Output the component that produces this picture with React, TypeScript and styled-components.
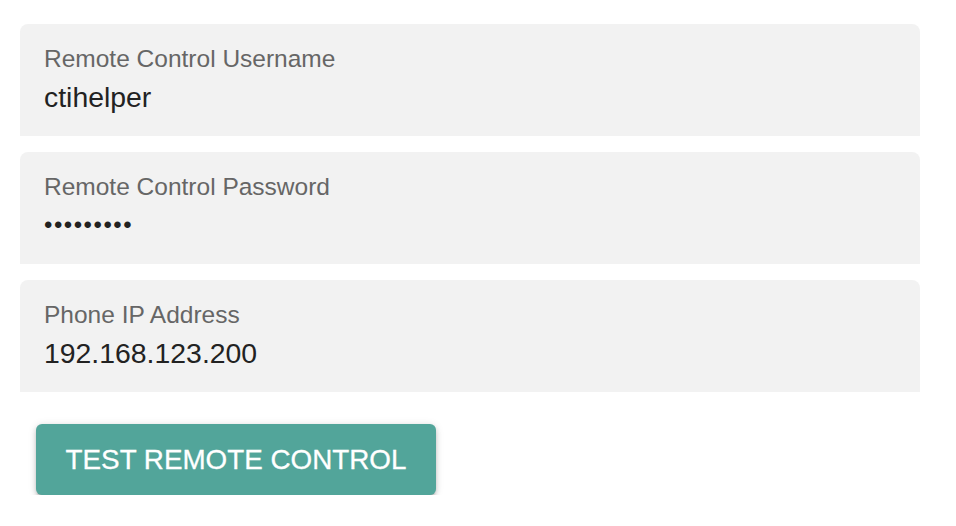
import React from "react"
import styled, { createGlobalStyle } from "styled-components"

const GlobalStyle = createGlobalStyle`
	html, body {
		margin: 0;
		padding: 0;
		background: #ffffff;
		font-family: "Liberation Sans", Arial, Helvetica, sans-serif;
	}
`

const Page = styled.div`
	display: flex;
	flex-direction: column;
	gap: 16px;
	padding: 24px 36px 0 20px;
	width: 900px;
`

const Field = styled.div`
	height: 112px;
	box-sizing: border-box;
	background-color: #f2f2f2;
	border-radius: 8px 8px 0 0;
	padding: 21px 24px 0 24px;
	display: flex;
	flex-direction: column;
`

const Label = styled.label`
	font-size: 24.5px;
	line-height: 28px;
	color: #666666;
`

const Value = styled.div<{ $secret?: boolean }>`
	margin-top: 4px;
	font-size: ${(p) => (p.$secret ? "24px" : "28.4px")};
	line-height: 40px;
	height: 40px;
	color: #222222;
	letter-spacing: ${(p) => (p.$secret ? "1.5px" : "0")};
`

const Actions = styled.div`
	padding: 16px 0 0 16px;
`

const Button = styled.button`
	height: 71px;
	width: 400px;
	border: none;
	border-radius: 6px;
	background-color: #52a59a;
	color: #ffffff;
	font-family: "Liberation Sans", Arial, Helvetica, sans-serif;
	font-size: 27.8px;
	text-transform: uppercase;
	-webkit-text-stroke: 0.3px #ffffff;
	box-shadow: 0 3px 3px -2px rgba(0, 0, 0, 0.22), 0 3px 5px 0 rgba(0, 0, 0, 0.16),
		0 1px 8px 0 rgba(0, 0, 0, 0.12);
	cursor: pointer;
`

const fields = [
	{ label: "Remote Control Username", value: "ctihelper" },
	{ label: "Remote Control Password", value: "•••••••••", secret: true },
	{ label: "Phone IP Address", value: "192.168.123.200" },
]

const App = () => {
	return (
		<>
			<GlobalStyle />
			<Page>
				{fields.map((f) => (
					<Field key={f.label}>
						<Label>{f.label}</Label>
						<Value $secret={f.secret}>{f.value}</Value>
					</Field>
				))}
				<Actions>
					<Button>Test Remote Control</Button>
				</Actions>
			</Page>
		</>
	)
}

export default App
